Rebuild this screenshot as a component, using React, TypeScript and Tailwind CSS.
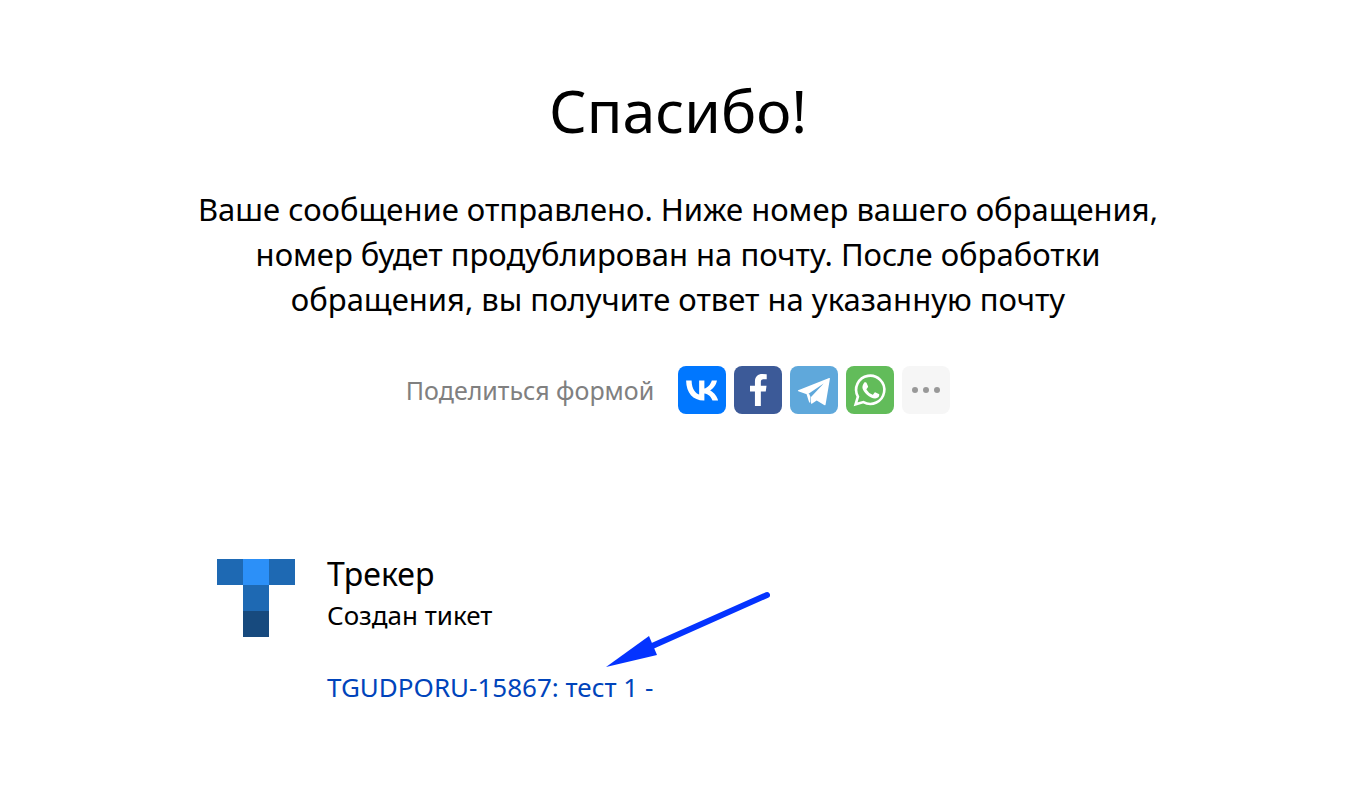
import type { ReactNode } from "react";

type Share = { name: string; className: string; icon: ReactNode };

const services: Share[] = [
  {
    name: "ВКонтакте",
    className: "bg-[#0077ff]",
    icon: (
      <svg viewBox="0 0 24 24" className="size-12" fill="#fff" aria-hidden="true">
        <path d="M12.878 17.304c-5.411 0-8.695-3.755-8.823-9.994h2.74c.086 4.583 2.171 6.528 3.77 6.925V7.31h2.627v3.954c1.542-.17 3.155-1.97 3.698-3.954h2.584c-.415 2.441-2.17 4.24-3.412 4.983 1.242.6 3.24 2.17 4.011 5.011h-2.84c-.6-1.9-2.07-3.37-4.04-3.57v3.57h-.315z" />
      </svg>
    ),
  },
  {
    name: "Facebook",
    className: "bg-[#3c5a98]",
    icon: (
      <svg viewBox="0 0 24 24" className="size-12" fill="#fff" aria-hidden="true">
        <path d="M13.423 20v-7.298h2.464l.369-2.845h-2.832V8.042c0-.824.23-1.385 1.417-1.385h1.515V4.111A20.255 20.255 0 0 0 14.148 4c-2.183 0-3.678 1.326-3.678 3.76v2.097H8v2.845h2.47V20h2.953z" />
      </svg>
    ),
  },
  {
    name: "Telegram",
    className: "bg-[#5fa8db]",
    icon: (
      <svg viewBox="0 0 48 48" className="size-12" fill="#fff" aria-hidden="true">
        <path d="M8.200 24.200 39.100 12q1-.300.800.800L35.600 38.400q-.300 1.200-1.500.700L26.700 34.600 22.200 37.500q-1.200.700-1.200-.600V31L33.700 17.500 17.400 28.500 8.300 25.300q-1-.600-.100-1.100z" />
        <path d="M16.600 28.200 19.200 36.600 20.300 36.400 20.500 31 19 27.500z" />
      </svg>
    ),
  },
  {
    name: "WhatsApp",
    className: "bg-[#62bc5a]",
    icon: (
      <svg viewBox="0 0 48 48" className="size-12" aria-hidden="true">
        <path d="M9.600 38.300 11.900 30.600A14.100 14.100 0 1 1 17.400 36.100z" fill="none" stroke="#fff" strokeWidth="2.600" strokeLinejoin="miter" />
        <path d="M18.500 16.300h1.100q.700 0 1 .700l1.400 3.300q.200.500-.100 1l-1.300 1.600q-.300.400 0 .800 2 3.400 5.600 4.900.500.200.900-.200l1.500-1.800q.400-.500 1-.200l3.200 1.600q.500.200.500.700c-.100 1.600-.700 2.500-1.800 3.100-2.200 1.200-4.300.500-6.400-.400-3.100-1.300-5.500-3.700-7.400-6.500-1.100-1.600-1.700-3.400-1-5.300.4-1.300 1.100-2.300 1.800-3.300z" fill="#fff" />
      </svg>
    ),
  },
];

function TrackerLogo() {
  return (
    <svg viewBox="0 0 78 78" className="size-[78px]" aria-hidden="true">
      <path fill="#1e69b3" d="M0 0h26v26H0zM52 0h26v26H52zM26 26h26v26H26z" />
      <path fill="#2c90f8" d="M26 0h26v26H26z" />
      <path fill="#174a7e" d="M26 52h26v26H26z" />
    </svg>
  );
}

function Arrow() {
  return (
    <svg viewBox="0 0 166 76" className="absolute -top-[78px] left-[277px] h-[76px] w-[166px]" aria-hidden="true">
      <path d="M163 4 46 56" stroke="#0433ff" strokeWidth="6" strokeLinecap="round" />
      <path d="M2 76 45 45 53 64z" fill="#0433ff" />
    </svg>
  );
}

export default function App() {
  return (
    <main className="mx-auto flex max-w-[980px] flex-col bg-white pt-[70px] font-['Noto_Sans','Liberation_Sans',sans-serif] text-black">
      <h1 className="text-center text-[59px] leading-[80px]">Спасибо!</h1>
      <p className="mt-[37px] text-center text-[31px] leading-[45px]">
        Ваше сообщение отправлено. Ниже номер вашего обращения, номер будет
        продублирован на почту. После обработки обращения, вы получите ответ на
        указанную почту
      </p>
      <section className="mt-11 flex items-center justify-center gap-6">
        <h2 className="text-[25px] leading-8 text-[#808080]">Поделиться формой</h2>
        <ul className="flex gap-2">
          {services.map((s) => (
            <li key={s.name}>
              <a href="#" aria-label={s.name} className={`flex size-12 items-center justify-center rounded-lg ${s.className}`}>
                {s.icon}
              </a>
            </li>
          ))}
          <li>
            <button type="button" aria-label="Ещё" className="flex size-12 items-center justify-center gap-[5px] rounded-lg bg-[#f6f6f6]">
              <span className="size-1.5 rounded-full bg-[#999]" />
              <span className="size-1.5 rounded-full bg-[#999]" />
              <span className="size-1.5 rounded-full bg-[#999]" />
            </button>
          </li>
        </ul>
      </section>
      <section className="mt-[137px] flex gap-8 pl-[29px]">
        <div className="pt-2">
          <TrackerLogo />
        </div>
        <div>
          <h2 className="text-[32px] leading-[45px]">Трекер</h2>
          <p className="mt-px text-[26px] leading-9">Создан тикет</p>
          <div className="relative mt-9">
            <a href="#" className="text-[26px] leading-9 text-[#04b]">
              TGUDPORU-15867: тест 1 -
            </a>
            <Arrow />
          </div>
        </div>
      </section>
    </main>
  );
}
